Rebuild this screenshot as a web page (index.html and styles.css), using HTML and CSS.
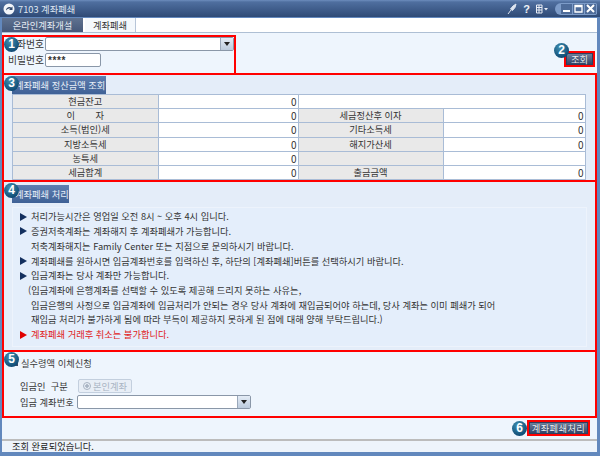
FILE: index.html
```html
<!DOCTYPE html>
<html lang="ko">
<head>
<meta charset="utf-8">
<title>7103 계좌폐쇄</title>
<link rel="stylesheet" href="styles.css">
</head>
<body>
<div class="window">
  <header class="titlebar">
    <svg class="app-icon" width="12" height="12" viewBox="0 0 12 12"><circle cx="6" cy="6" r="5.5" fill="#f2f5fa"/><path d="M3 7.5 C3 4.5 6 3 8.5 4.5 L9.5 3.5 V7 H6 L7.3 5.7 C6 5 4.5 5.5 3 7.5Z" fill="#31496f"/></svg>
    <span class="title">7103 계좌폐쇄</span>
    <div class="title-tools">
      <svg width="10" height="12" viewBox="0 0 10 12"><path d="M9 1 L6 3 L3.5 6 L5.5 7.5 L8 4.5Z M4 7 L1 11" fill="#dfe6f1" stroke="#dfe6f1"/></svg>
      <span class="help">?</span>
      <svg width="12" height="10" viewBox="0 0 12 10"><path d="M0.5 1 H6 V9 H0.5Z M3 1 V9 M0.5 3.5 H6 M0.5 6 H6" fill="none" stroke="#e8edf5"/><path d="M8 4 H12 L10 6.5Z" fill="#e8edf5"/></svg>
      <div class="win-buttons">
        <span class="win-btn"><svg width="9" height="9" viewBox="0 0 9 9"><rect x="1" y="6" width="7" height="2" fill="#fff"/></svg></span>
        <span class="win-btn"><svg width="9" height="9" viewBox="0 0 9 9"><path d="M1 1.5 H8 V8 H1Z M1 2.5 H8" fill="none" stroke="#fff" stroke-width="1.3"/></svg></span>
        <span class="win-btn"><svg width="9" height="9" viewBox="0 0 9 9"><path d="M1 1 L8 8 M8 1 L1 8" stroke="#fff" stroke-width="2"/></svg></span>
      </div>
    </div>
  </header>

  <nav class="tabs">
    <span class="tab tab-off">온라인계좌개설</span>
    <span class="tab tab-on">계좌폐쇄</span>
  </nav>

  <main class="content">
    <div class="top-row">
      <section class="mark sect-login">
        <span class="badge badge-1">1</span>
        <div class="login-row">
          <label class="login-label">계좌번호</label>
          <div class="select select-account"><span class="select-arrow"></span></div>
        </div>
        <div class="login-row">
          <label class="login-label">비밀번호</label>
          <div class="password">****</div>
        </div>
      </section>
      <div class="query-wrap">
        <span class="badge badge-2">2</span>
        <div class="mark-btn"><button class="btn btn-query">조회</button></div>
      </div>
    </div>

    <section class="mark sect-amount">
      <span class="badge badge-3">3</span>
      <h2 class="sect-title title-amount">계좌폐쇄 정산금액 조회</h2>
      <div class="grid">
        <div class="lab">현금잔고</div><div class="val">0</div><div class="val wide"></div>
        <div class="lab">이&nbsp;&nbsp;&nbsp;&nbsp;&nbsp;&nbsp;&nbsp;&nbsp;자</div><div class="val">0</div><div class="lab">세금정산후 이자</div><div class="val">0</div>
        <div class="lab">소득(법인)세</div><div class="val">0</div><div class="lab">기타소득세</div><div class="val">0</div>
        <div class="lab">지방소득세</div><div class="val">0</div><div class="lab">해지가산세</div><div class="val">0</div>
        <div class="lab">농특세</div><div class="val">0</div><div class="lab"></div><div class="val"></div>
        <div class="lab">세금합계</div><div class="val">0</div><div class="lab">출금금액</div><div class="val">0</div>
      </div>
    </section>

    <section class="mark sect-notice">
      <span class="badge badge-4">4</span>
      <h2 class="sect-title title-notice">계좌폐쇄 처리</h2>
      <div class="notice">
        <p class="line"><i class="tri"></i>처리가능시간은 영업일 오전 8시 ~ 오후 4시 입니다.</p>
        <p class="line"><i class="tri"></i>증권저축계좌는 계좌해지 후 계좌폐쇄가 가능합니다.</p>
        <p class="line indent">저축계좌해지는 Family Center 또는 지점으로 문의하시기 바랍니다.</p>
        <p class="line"><i class="tri"></i>계좌폐쇄를 원하시면 입금계좌번호를 입력하신 후, 하단의 [계좌폐쇄]버튼를 선택하시기 바랍니다.</p>
        <p class="line"><i class="tri"></i>입금계좌는 당사 계좌만 가능합니다.</p>
        <p class="line indent-paren">(입금계좌에 은행계좌를 선택할 수 있도록 제공해 드리지 못하는 사유는,</p>
        <p class="line indent">입금은행의 사정으로 입금계좌에 입금처리가 안되는 경우 당사 계좌에 재입금되어야 하는데, 당사 계좌는 이미 폐쇄가 되어</p>
        <p class="line indent">재입금 처리가 불가하게 됨에 따라 부득이 제공하지 못하게 된 점에 대해 양해 부탁드립니다.)</p>
        <p class="line warn"><i class="tri tri-red"></i>계좌폐쇄 거래후 취소는 불가합니다.</p>
      </div>
    </section>

    <section class="mark sect-transfer">
      <span class="badge badge-5">5</span>
      <h2 class="plain-title"><i class="mini-icon"></i>실수령액 이체신청</h2>
      <div class="form-row row-kind">
        <span class="form-label">입금인&nbsp;&nbsp;구분</span>
        <span class="radio-btn"><i class="radio"></i>본인계좌</span>
      </div>
      <div class="form-row">
        <span class="form-label">입금 계좌번호</span>
        <div class="select select-deposit"><span class="select-arrow"></span></div>
      </div>
    </section>

    <div class="action-row">
      <span class="badge badge-6">6</span>
      <div class="mark-btn"><button class="btn btn-close">계좌폐쇄처리</button></div>
    </div>

    <footer class="status"><span>조회 완료되었습니다.</span></footer>
  </main>
</div>
</body>
</html>
```
FILE: styles.css
```css
* { box-sizing: border-box; }
html, body { margin: 0; padding: 0; }
body {
  width: 600px;
  height: 456px;
  overflow: hidden;
  font-family: "Noto Sans CJK KR", "Noto Sans", sans-serif;
  font-size: 9.25px;
  color: #333;
}
.window {
  width: 600px;
  height: 456px;
  background: #6288bd;
  padding: 0 3px 4px 2px;
  display: flex;
  flex-direction: column;
}
.titlebar {
  height: 17px;
  margin: 0 -3px 0 -2px;
  padding: 0 3px 0 3px;
  background: linear-gradient(#6d8dbd 0, #4f6f9f 2px, #2f4a76 100%);
  display: flex;
  align-items: center;
  gap: 3px;
  color: #dfe6f1;
}
.title { font-size: 9.25px; }
.title-tools { margin-left: auto; display: flex; align-items: center; gap: 4px; }
.help { font: bold 11px "Liberation Sans", sans-serif; color: #eef2f8; margin: 0 2px; }
.win-buttons {
  display: flex;
  margin-left: 3px;
  gap: 1px;
  padding: 1px 1px 1px 6px;
  border-radius: 7px 2px 2px 7px;
  background: #7d9cc9;
}
.win-btn {
  width: 11px;
  height: 10px;
  display: flex;
  align-items: center;
  justify-content: center;
  background: #4e6c9a;
}
.tabs {
  height: 14px;
  margin-top: 1px;
  background: #fff;
  display: flex;
  font-size: 9.25px;
  line-height: 14px;
  text-align: center;
}
.tab-off { width: 81px; background: linear-gradient(#5f7290, #45587a); color: #e8edf4; }
.tab-on { width: 51px; margin-left: 2px; background: #f4f8fc; color: #333; border-right: 1px solid #b7c5d8; }
.content {
  flex: 1;
  background: #eef5fd;
  border-top: 1px solid #aebfd4;
  display: flex;
  flex-direction: column;
  min-height: 0;
  padding-top: 2px;
}
.mark { border: 2px solid #f00; position: relative; }
.mark-btn { border: 2px solid #f00; display: flex; }
.badge {
  position: absolute;
  width: 15px;
  height: 15px;
  border-radius: 50%;
  background: radial-gradient(circle at 40% 30%, #3f8fb0, #0f4a74 75%);
  color: #fff;
  font: bold 12px/15px "Liberation Sans", sans-serif;
  text-align: center;
  z-index: 2;
}
.top-row { height: 38px; display: flex; justify-content: space-between; }
.sect-login {
  width: 234px;
  height: 38px;
  border-bottom: 0;
  display: flex;
  flex-direction: column;
  gap: 2px;
}
.login-row { display: flex; align-items: center; }
.login-label { width: 41px; padding-left: 4px; font-size: 9.75px; line-height: 14px; white-space: nowrap; }
.select {
  height: 14px;
  background: #fff;
  border: 1px solid #8a97a8;
  border-radius: 2px;
  display: flex;
  justify-content: flex-end;
}
.select-arrow {
  width: 13px;
  background: linear-gradient(#e4ecf6, #bccbdd);
  border-left: 1px solid #9aa8ba;
  position: relative;
}
.select-arrow::after {
  content: "";
  position: absolute;
  left: 3px;
  top: 4px;
  border: 3px solid transparent;
  border-top: 4px solid #222;
  border-bottom: 0;
}
.select-account { flex: 1; }
.password {
  width: 56px;
  height: 14px;
  border: 1px solid #8a97a8;
  border-radius: 2px;
  background: #fff;
  padding-left: 2px;
  font: bold 10px/14px "Liberation Sans", sans-serif;
  letter-spacing: 0.6px;
}
.query-wrap { position: relative; padding-top: 16px; padding-right: 2px; }
.btn {
  padding: 0;
  border: 1px solid #2e405f;
  background: linear-gradient(#70809b, #34466a);
  color: #eef2f7;
  font-family: "Noto Sans CJK KR", sans-serif;
  font-size: 9.25px;
  line-height: 10px;
  text-shadow: 0 0 1px #1c2a44;
}
.btn-query { width: 27px; height: 12px; }
.btn-close { width: 59px; height: 12px; letter-spacing: 0.4px; }
.badge-1 { left: 0; top: 0; }
.badge-2 { left: -10px; top: 8px; }
.badge-3 { left: 0; top: 1px; }
.badge-4 { left: 0; top: 1px; }
.badge-5 { left: 0; top: 0; }
.badge-6 { left: 510px; top: 3px; }
.sect-amount {
  height: 110px;
  background: #e4edf9;
  padding: 1px 8px 0 8px;
}
.sect-title {
  margin: 0;
  height: 18px;
  background: linear-gradient(#5f7fb0, #3f6196);
  color: #e8eef7;
  font-size: 9.25px;
  font-weight: 400;
  line-height: 18px;
  padding-left: 3px;
  white-space: nowrap;
}
.title-amount { width: 94px; }
.title-notice { width: 57px; }
.grid {
  display: grid;
  grid-template-columns: 145.5px 140px 145px 142px;
  width: 574px;
  border-top: 1px solid #a9bcd6;
  border-left: 1px solid #a9bcd6;
}
.lab, .val {
  height: 14.2px;
  border-right: 1px solid #a9bcd6;
  border-bottom: 1px solid #a9bcd6;
  line-height: 13px;
  white-space: nowrap;
}
.lab { background: #e9e9e9; text-align: center; }
.val { background: #fff; text-align: right; padding-right: 1px; font-size: 10px; }
.wide { grid-column: span 2; }
.sect-notice {
  height: 171px;
  border-top: 0;
  background: #e4edf9;
  padding: 3px 8px 0 8px;
}
.notice {
  margin-top: 4px;
  height: 140px;
  background: #e4eefb;
  border: 1px solid #edf3fc;
  padding: 1px 0 0 7px;
}
.line { margin: 0; height: 14.72px; line-height: 14.72px; white-space: nowrap; display: flex; align-items: center; }
.tri {
  width: 0;
  height: 0;
  border-left: 7px solid #14305f;
  border-top: 4px solid transparent;
  border-bottom: 4px solid transparent;
  margin-right: 4px;
}
.tri-red { border-left-color: #e00000; }
.indent { padding-left: 11px; }
.indent-paren { padding-left: 8px; }
.warn { color: #e02020; }
.sect-transfer {
  height: 66px;
  border-top: 0;
  padding: 4px 0 0 8px;
}
.plain-title {
  margin: 0 0 8px 0;
  font-size: 9.25px;
  font-weight: 400;
  line-height: 14px;
  display: flex;
  align-items: center;
  gap: 3px;
  color: #3a3a3a;
}
.mini-icon { width: 6px; height: 6px; background: #3a4c6a; }
.form-row { display: flex; align-items: center; height: 15px; padding-left: 8px; margin-top: 1px; }
.row-kind { margin-bottom: 1px; }
.form-label { width: 57px; white-space: nowrap; }
.radio-btn {
  width: 54px;
  height: 14px;
  margin-left: 1px;
  border: 1px solid #c3cfde;
  border-radius: 2px;
  background: #e8eef6;
  color: #a9b4c3;
  display: flex;
  align-items: center;
  justify-content: center;
  gap: 2px;
}
.radio { width: 8px; height: 8px; border: 1px solid #a9b4c3; border-radius: 50%; background: radial-gradient(circle, #a9b4c3 0 1.5px, transparent 2px); }
.select-deposit { width: 174px; }
.action-row {
  position: relative;
  height: 21px;
  padding: 2px 7px 0 0;
  display: flex;
  justify-content: flex-end;
  align-items: flex-start;
}
.status {
  flex: 1;
  border-top: 2px solid #bcbcbc;
  background: #eef4fb;
  padding-left: 10px;
  line-height: 11px;
  color: #222;
}
.status span { display: block; }
```
